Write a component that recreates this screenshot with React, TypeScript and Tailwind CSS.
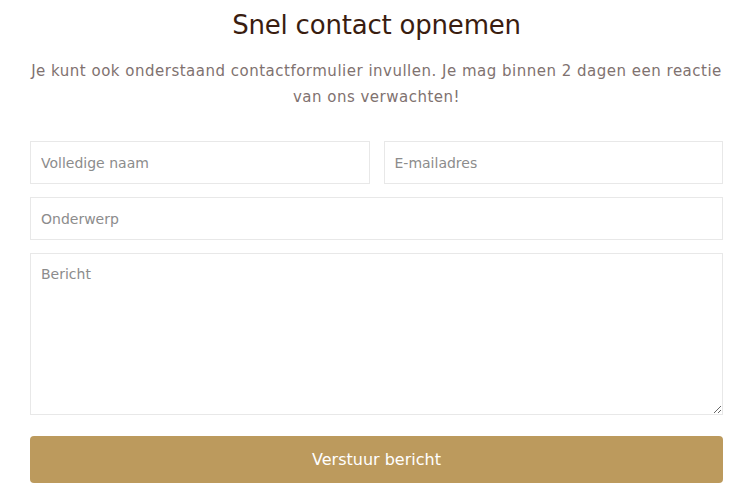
import React from "react";

export default function App() {
  const field =
    "w-full h-[43px] border border-[#e8e8e8] bg-white px-[10px] text-[14px] text-[#555] placeholder:text-[#8c8c8c] outline-none";

  return (
    <div
      className="min-h-[494px] bg-white pl-[30px] pr-[24px] pt-[6px]"
      style={{ fontFamily: '"DejaVu Sans", "Noto Sans", sans-serif' }}
    >
      <h2 className="text-center text-[26px] leading-[38px] text-[#3a1d10] tracking-[-0.2px]">
        Snel contact opnemen
      </h2>
      <p className="mt-[14px] whitespace-nowrap text-center text-[15px] leading-[26px] text-[#7f7270] tracking-[0.5px]">
        Je kunt ook onderstaand contactformulier invullen. Je mag binnen 2 dagen een reactie
        <br />
        van ons verwachten!
      </p>
      <form className="mt-[31px] flex flex-col gap-[13px]">
        <div className="flex gap-[14px]">
          <input className={field} placeholder="Volledige naam" />
          <input className={field} placeholder="E-mailadres" />
        </div>
        <input className={field} placeholder="Onderwerp" />
        <textarea
          className="w-full h-[162px] border border-[#e8e8e8] bg-white px-[10px] py-[10px] text-[14px] text-[#555] placeholder:text-[#8c8c8c] outline-none"
          placeholder="Bericht"
        />
        <button
          type="button"
          className="mt-[8px] h-[47px] w-full rounded-[4px] bg-[#bc9a5d] text-[16px] text-white"
        >
          Verstuur bericht
        </button>
      </form>
    </div>
  );
}
